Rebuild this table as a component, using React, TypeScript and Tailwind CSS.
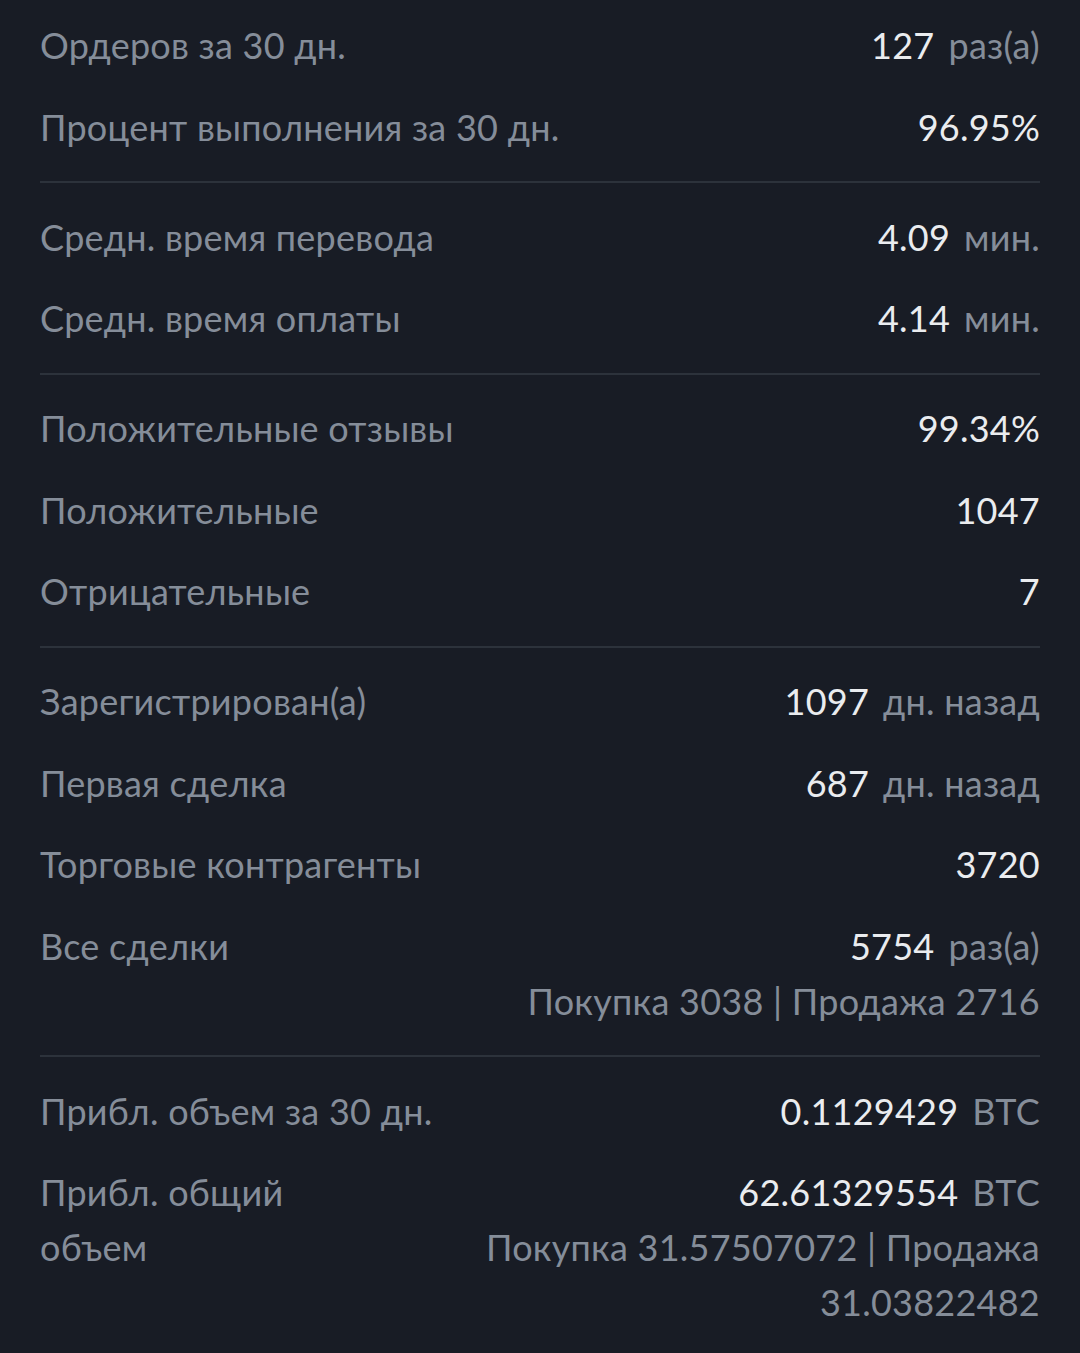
import React from "react";

type Row = { label: React.ReactNode; value: React.ReactNode; unit?: string; sub?: string[] };

const sections: Row[][] = [
  [
    { label: "Ордеров за 30 дн.", value: "127", unit: "раз(а)" },
    { label: "Процент выполнения за 30 дн.", value: "96.95%" },
  ],
  [
    { label: "Средн. время перевода", value: "4.09", unit: "мин." },
    { label: "Средн. время оплаты", value: "4.14", unit: "мин." },
  ],
  [
    { label: "Положительные отзывы", value: "99.34%" },
    { label: "Положительные", value: "1047" },
    { label: "Отрицательные", value: "7" },
  ],
  [
    { label: "Зарегистрирован(а)", value: "1097", unit: "дн. назад" },
    { label: "Первая сделка", value: "687", unit: "дн. назад" },
    { label: "Торговые контрагенты", value: "3720" },
    { label: "Все сделки", value: "5754", unit: "раз(а)", sub: ["Покупка 3038 | Продажа 2716"] },
  ],
  [
    { label: "Прибл. объем за 30 дн.", value: "0.1129429", unit: "BTC" },
    {
      label: (
        <>
          Прибл. общий
          <br />
          объем
        </>
      ),
      value: "62.61329554",
      unit: "BTC",
      sub: ["Покупка 31.57507072 | Продажа", "31.03822482"],
    },
  ],
];

export default function App() {
  return (
    <div
      className="w-[1080px] h-[1353px] bg-[#181c25] px-[40px] pt-[18px] overflow-hidden"
      style={{ fontFamily: "Lato, 'Noto Sans', sans-serif" }}
    >
      {sections.map((sec, si) => (
        <div key={si}>
          {si > 0 && <div className="h-[2px] bg-[#2c323b] my-[26.5px]" />}
          <div className="flex flex-col gap-[26.5px]">
            {sec.map((r, ri) => (
              <div key={ri} className="flex justify-between text-[36px] leading-[55px] tracking-[0.25px]">
                <div className="text-[#858d99] whitespace-nowrap">{r.label}</div>
                <div className="flex flex-col items-end">
                  <div className="flex items-baseline gap-[14px]">
                    <span className="text-[#eaecef]">{r.value}</span>
                    {r.unit && <span className="text-[#858d99]">{r.unit}</span>}
                  </div>
                  {r.sub?.map((s, i) => (
                    <div key={i} className="text-[#858d99] whitespace-nowrap">
                      {s}
                    </div>
                  ))}
                </div>
              </div>
            ))}
          </div>
        </div>
      ))}
    </div>
  );
}
